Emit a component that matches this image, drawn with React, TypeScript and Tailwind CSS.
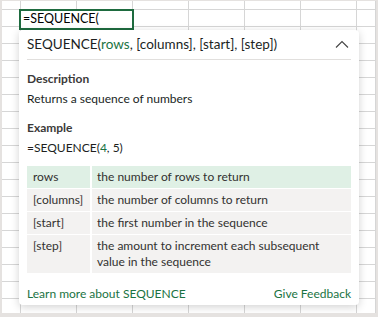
import React from 'react'

const colWidths = [19, 56, 56, 56, 56, 56, 56, 19]
const rowHeights = [9, ...Array(18).fill(17)]

interface Arg {
  name: string
  text: string
  active?: boolean
}

const args: Arg[] = [
  { name: 'rows', text: 'the number of rows to return', active: true },
  { name: '[columns]', text: 'the number of columns to return' },
  { name: '[start]', text: 'the first number in the sequence' },
  { name: '[step]', text: 'the amount to increment each subsequent value in the sequence' },
]

function SheetGrid() {
  return (
    <div className="flex flex-col">
      {rowHeights.map((h, r) => (
        <div key={r} className="flex" style={{ height: h }}>
          {colWidths.map((w, c) => (
            <div
              key={c}
              className="border-r border-b border-[#d6d6d6] bg-white shrink-0"
              style={{ width: w, height: h }}
            />
          ))}
        </div>
      ))}
    </div>
  )
}

function ChevronUp() {
  return (
    <svg width="14" height="8" viewBox="0 0 14 8" fill="none">
      <path d="M1 7.5L7 1.5L13 7.5" stroke="#444" strokeWidth="1.1" />
    </svg>
  )
}

export default function App() {
  return (
    <div
      className="w-[378px] h-[317px] bg-[#e5e2e0] pt-[1px] pl-[2px] overflow-hidden"
      style={{ fontFamily: '"Segoe UI", Lato, "Open Sans", sans-serif' }}
    >
      <div className="relative w-[374px] h-[312px] overflow-hidden bg-white">
        <SheetGrid />

        {/* active cell */}
        <div className="absolute left-[17px] top-[8px] w-[115px] h-[21px] border-2 border-[#1e6b3f] bg-white flex items-center pl-[2px] text-[12.5px] text-black leading-none">
          =SEQUENCE(
        </div>

        {/* formula tooltip */}
        <div className="absolute left-[17px] top-[29px] w-[340px] h-[275px] bg-white rounded-[4px] shadow-[0_2px_8px_rgba(0,0,0,0.18)] px-2 flex flex-col text-[12px] text-[#201f1e]">
          <div className="h-[30px] flex items-center justify-between border-b border-[#e1dfdd] shrink-0">
            <div className="text-[13.5px] text-[#201f1e]">
              SEQUENCE(<span className="text-[#1a7343]">rows</span>, [columns], [start], [step])
            </div>
            <div className="mr-[2px] mt-[-2px]">
              <ChevronUp />
            </div>
          </div>

          <div className="mt-[9px] leading-[20px] font-bold text-[#3b3a39]">Description</div>
          <div className="leading-[20px]">Returns a sequence of numbers</div>

          <div className="mt-[9px] leading-[20px] font-bold text-[#3b3a39]">Example</div>
          <div className="leading-[20px]">
            =SEQUENCE(<span className="text-[#1a7343]">4</span>, 5)
          </div>

          <div className="mt-[8px] flex flex-col gap-[1px] text-[#323130]">
            {args.map((a) => (
              <div key={a.name} className="flex gap-[2px]">
                <div
                  className={`w-[63px] shrink-0 px-[6px] py-[3px] leading-[16px] ${
                    a.active ? 'bg-[#dff0e5]' : 'bg-[#f3f2f1]'
                  }`}
                >
                  {a.name}
                </div>
                <div
                  className={`flex-1 px-[5px] py-[3px] leading-[16px] ${
                    a.active ? 'bg-[#dff0e5]' : 'bg-[#f3f2f1]'
                  }`}
                >
                  {a.text}
                </div>
              </div>
            ))}
          </div>

          <div className="mt-[11px] flex justify-between leading-[20px] text-[#1a7343]">
            <span>Learn more about SEQUENCE</span>
            <span>Give Feedback</span>
          </div>
        </div>
      </div>
    </div>
  )
}
